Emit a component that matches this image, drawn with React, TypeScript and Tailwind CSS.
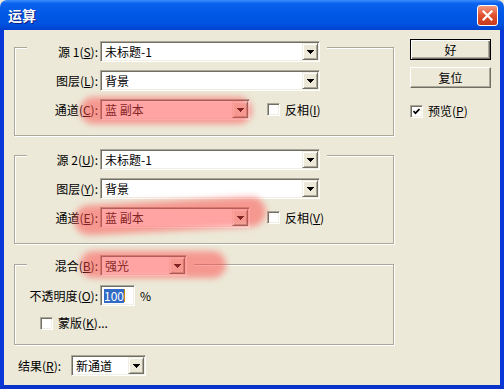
import React from 'react';

const sunken =
  'border border-t-[#ACA899] border-l-[#ACA899] border-b-white border-r-white shadow-[inset_1px_1px_0_#716F64,inset_-1px_-1px_0_#F1EFE2]';
const group =
  'border border-[#ACA899] shadow-[1px_1px_0_#fff,inset_1px_1px_0_#fff]';

const Arrow = () => (
  <div className="flex h-[17px] w-[16px] shrink-0 items-center justify-center border border-t-[#F1EFE2] border-l-[#F1EFE2] border-b-[#716F64] border-r-[#716F64] bg-[#ECE9D8] shadow-[inset_1px_1px_0_#fff,inset_-1px_-1px_0_#ACA899]">
    <svg width="7" height="4" viewBox="0 0 7 4" shapeRendering="crispEdges">
      <path d="M0 0h7v1H0zM1 1h5v1H1zM2 2h3v1H2zM3 3h1v1H3z" fill="#000" />
    </svg>
  </div>
);

const Combo = ({ value, className }: { value: string; className: string }) => (
  <div className={`flex h-[21px] shrink-0 items-center justify-between bg-white pl-[4px] pr-[1px] ${sunken} ${className}`}>
    <span className="leading-[14px]">{value}</span>
    <Arrow />
  </div>
);

const Check = ({ checked }: { checked?: boolean }) => (
  <div className={`flex h-[13px] w-[13px] shrink-0 items-center justify-center bg-white ${sunken}`}>
    {checked && (
      <svg width="7" height="7" viewBox="0 0 7 7">
        <polyline points="0.5,3 2.5,5.2 6.5,1" fill="none" stroke="#000" strokeWidth="1.7" />
      </svg>
    )}
  </div>
);

const Lbl = ({ text, k, colon = true }: { text: string; k: string; colon?: boolean }) => (
  <span>
    {text}(<u>{k}</u>){colon ? ':' : ''}
  </span>
);

// one labelled row; label column ends at x=98, the field starts at x=100
const Row = ({ label, children, legend }: { label: React.ReactNode; children: React.ReactNode; legend?: boolean }) => (
  <div className={`ml-[12px] flex items-center ${legend ? 'w-fit bg-[#ECE9D8] pr-[7px]' : ''}`}>
    <div className="w-[73px] shrink-0 pr-[2px] text-right">{label}</div>
    {children}
  </div>
);

const SourceGroup = ({ n, sk, lk, ck, ik }: { n: string; sk: string; lk: string; ck: string; ik: string }) => (
  <div className={`flex flex-col pb-[15px] ${group}`}>
    <div className="-mt-[7px]">
      <Row legend label={<span>源 {n}(<u>{sk}</u>):</span>}>
        <Combo value="未标题-1" className="w-[220px]" />
      </Row>
    </div>
    <div className="mt-[8px]">
      <Row label={<Lbl text="图层" k={lk} />}>
        <Combo value="背景" className="w-[220px]" />
      </Row>
    </div>
    <div className="mt-[8px]">
      <Row label={<Lbl text="通道" k={ck} />}>
        <Combo value="蓝 副本" className="w-[150px]" />
        <div className="ml-[17px] flex items-center gap-[5px]">
          <Check />
          <Lbl text="反相" k={ik} colon={false} />
        </div>
      </Row>
    </div>
  </div>
);

export default function App() {
  return (
    <div className="relative h-[389px] w-[504px] overflow-hidden bg-[#ECE9D8] font-['Noto_Sans_CJK_SC',sans-serif] text-[12px] leading-[14px] text-black">
      {/* title bar */}
      <div className="flex h-[30px] items-center justify-between rounded-t-[7px] bg-[linear-gradient(to_bottom,#3D8DFB_0%,#0A62EE_12%,#0058E6_45%,#0052E0_80%,#0041CE_100%)] pl-[8px] pr-[6px]">
        <span className="text-[14px] font-bold text-white [text-shadow:1px_1px_0_#0A1E80]">运算</span>
        <div className="flex h-[21px] w-[21px] items-center justify-center rounded-[3px] border border-white bg-[linear-gradient(to_bottom,#F29A80,#E0502E_50%,#C83A1C)]">
          <svg width="11" height="11" viewBox="0 0 11 11">
            <path d="M1.5 1.5l8 8M9.5 1.5l-8 8" stroke="#fff" strokeWidth="2.2" strokeLinecap="square" />
          </svg>
        </div>
      </div>

      {/* body */}
      <div className="flex h-[359px] items-start border-x-[4px] border-b-[4px] border-x-[#0838D6] border-b-[#0733C8]">
        <div className="ml-[10px] flex w-[380px] flex-col pt-[17px]">
          <SourceGroup n="1" sk="S" lk="L" ck="C" ik="I" />
          <div className="mt-[19px]">
            <SourceGroup n="2" sk="U" lk="Y" ck="E" ik="V" />
          </div>

          <div className={`mt-[20px] flex flex-col pb-[14px] ${group}`}>
            <div className="-mt-[10px]">
              <Row legend label={<Lbl text="混合" k="B" />}>
                <Combo value="强光" className="w-[87px]" />
              </Row>
            </div>
            <div className="mt-[9px] flex items-center">
              <div className="w-[85px] shrink-0 pr-[2px] text-right">
                <Lbl text="不透明度" k="O" />
              </div>
              <div className={`flex h-[21px] w-[35px] items-center bg-white pl-[3px] ${sunken}`}>
                <span className="bg-[#316AC5] text-white">100</span>
                <span className="h-[13px] w-px bg-[#C89000]" />
              </div>
              <span className="ml-[5px]">%</span>
            </div>
            <div className="ml-[25px] mt-[10px] flex items-center gap-[5px]">
              <Check />
              <span>
                蒙版(<u>K</u>)...
              </span>
            </div>
          </div>

          <div className="mt-[10px] flex items-center">
            <div className="ml-[4px] w-[53px] shrink-0 pr-[2px]">
              <Lbl text="结果" k="R" />
            </div>
            <Combo value="新通道" className="w-[75px]" />
          </div>
        </div>

        <div className="ml-[16px] flex flex-col pt-[9px]">
          <button className="flex h-[21px] w-[81px] items-center justify-center border border-black bg-[#ECE9D8] shadow-[inset_1px_1px_0_#fff,inset_-1px_-1px_0_#716F64,inset_-2px_-2px_0_#ACA899]">
            好
          </button>
          <button className="mt-[7px] flex h-[21px] w-[81px] items-center justify-center border border-t-white border-l-white border-b-[#716F64] border-r-[#716F64] bg-[#ECE9D8] shadow-[inset_-1px_-1px_0_#ACA899]">
            复位
          </button>
          <div className="mt-[16px] flex items-center gap-[5px]">
            <Check checked />
            <span>
              预览(<u>P</u>)
            </span>
          </div>
        </div>
      </div>

      {/* red marker strokes drawn over the dialog */}
      <div className="pointer-events-none absolute left-[80px] top-[97px] h-[27px] w-[172px] rounded-full bg-[#ff4848]/50 blur-[3px]" />
      <div className="pointer-events-none absolute left-[74px] top-[201px] h-[30px] w-[192px] rotate-[-3deg] rounded-full bg-[#ff4848]/50 blur-[3px]" />
      <div className="pointer-events-none absolute left-[80px] top-[251px] h-[27px] w-[146px] rounded-full bg-[#ff4848]/50 blur-[3px]" />
    </div>
  );
}
